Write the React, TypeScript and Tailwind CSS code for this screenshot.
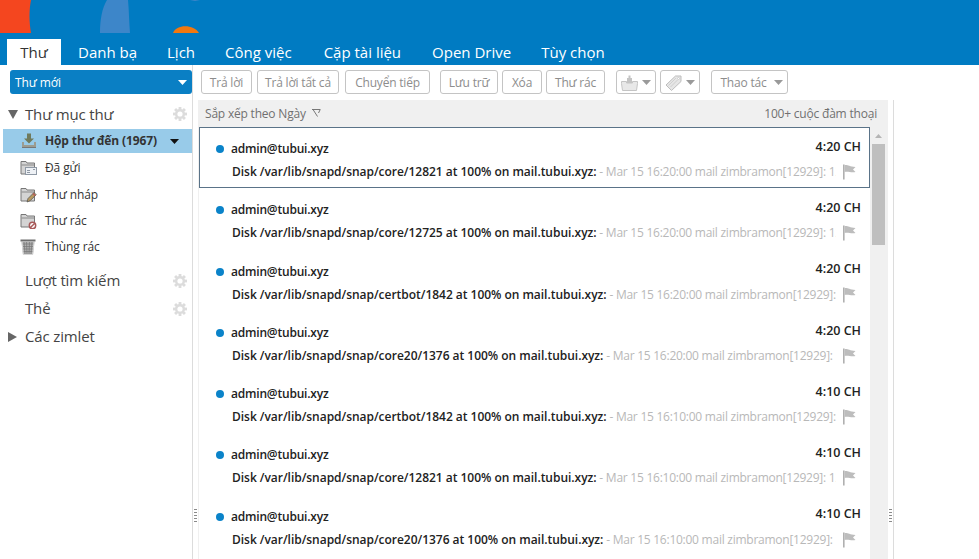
import React from "react";

const font = { fontFamily: '"Open Sans","Noto Sans",sans-serif' };

const Caret = ({ c = "#9a9a9a" }: { c?: string }) => (
  <svg width="9" height="5" viewBox="0 0 9 5"><path d="M0 0h9L4.5 5z" fill={c} /></svg>
);

const Gear = ({ className = "" }: { className?: string }) => (
  <svg width="14" height="14" viewBox="0 0 14 14" className={className}>
    <g fill="#dcdcdc">
      <circle cx="7" cy="7" r="5" />
      {[0, 45, 90, 135].map((a) => (
        <rect key={a} x="5.6" y="0" width="2.8" height="14" transform={`rotate(${a} 7 7)`} />
      ))}
    </g>
    <circle cx="7" cy="7" r="2.6" fill="#fff" />
  </svg>
);

const Flag = () => (
  <svg width="13" height="16" viewBox="0 0 13 16">
    <rect x="0" y="0.5" width="1.6" height="15" fill="#b0b0b0" />
    <path d="M1.6 1C5 .5 6 2.5 12.5 3L10 5.5l2.5 2.5C8 9 5 7 1.6 8z" fill="#bdbdbd" />
  </svg>
);

const Btn = ({ children, w }: { children: React.ReactNode; w: string }) => (
  <div className={`h-6 ${w} shrink-0 pt-px flex items-center justify-center gap-1 rounded-[3px] border border-[#c4c4c4] text-[12px] tracking-[-0.2px] text-[#8d8d8d] bg-white`}>
    {children}
  </div>
);

const FolderIcon = ({ kind }: { kind: string }) => {
  if (kind === "inbox")
    return (
      <svg width="16" height="16" viewBox="0 0 16 16">
        <path d="M6 0.5h4v5h3L8 10.5 3 5.5h3z" fill="#6f7a5c" />
        <path d="M1 9h2v3h10V9h2v5.5H1z" fill="#9c9c90" />
        <rect x="1" y="14" width="14" height="1" fill="#777" />
      </svg>
    );
  if (kind === "trash")
    return (
      <svg width="16" height="16" viewBox="0 0 16 16">
        <rect x="0.5" y="0.5" width="15" height="2" fill="#6e6e6e" />
        <path d="M1.5 2.5h13L13 15.5H3z" fill="#b0b0b0" />
        <path d="M4 3l1 12M6.5 3l.5 12M9.5 3L9 15M12 3l-1 12M2 5h12M2.3 7.5h11.4M2.6 10h10.8M2.9 12.5h10.2" stroke="#777" strokeWidth="0.7" />
        <path d="M2 3l1.3 12.5" stroke="#d8d8d8" strokeWidth="1" />
        <path d="M14 3l-1.3 12.5" stroke="#d8d8d8" strokeWidth="1" />
      </svg>
    );
  return (
    <svg width="17" height="16" viewBox="0 0 17 16">
      <path d="M1 1.5h5l1 1.5h7.5V14H1z" fill="#d4d4d4" stroke="#777" strokeWidth="1" />
      <rect x="1.5" y="4.5" width="13" height="1" fill="#8a8a8a" />
      {kind === "sent" && (
        <>
          <rect x="5.5" y="7.5" width="11" height="7" fill="#eef1f5" stroke="#8f99a5" />
          <path d="M7 10.5h3M7 12.5h3M13 9.5h2" stroke="#8f99a5" />
        </>
      )}
      {kind === "draft" && (
        <>
          <path d="M7 15l1-3.5 6-6 2.2 2.2-6 6z" fill="#b79a62" stroke="#4f4f4f" strokeWidth="0.7" />
          <path d="M13 6.5l2.2 2.2" stroke="#b85a5a" strokeWidth="1.4" />
        </>
      )}
      {kind === "junk" && (
        <>
          <circle cx="12.5" cy="12.5" r="3.2" fill="#fff" stroke="#a85a5a" strokeWidth="1.5" />
          <path d="M10.2 14.8l4.6-4.6" stroke="#a85a5a" strokeWidth="1.5" />
        </>
      )}
    </svg>
  );
};

const Folder = ({ kind, label }: { kind: string; label: string }) => (
  <div className="h-[26.4px] flex items-center pl-[20px]">
    <div className="w-[25px] flex"><FolderIcon kind={kind} /></div>
    <span className="text-[12px] tracking-[-0.1px] text-[#333]">{label}</span>
  </div>
);

const SideHead = ({ label, gear, tri }: { label: string; gear?: boolean; tri?: "down" | "right" }) => (
  <div className="h-7 flex items-center pr-[5px]">
    <div className="w-[25px] pl-[8px] flex">
      {tri === "down" && <svg width="10" height="9" viewBox="0 0 10 9"><path d="M0 0h10L5 9z" fill="#666" /></svg>}
      {tri === "right" && <svg width="9" height="10" viewBox="0 0 9 10"><path d="M0 0l9 5-9 5z" fill="#666" /></svg>}
    </div>
    <span className="flex-1 text-[15px] tracking-[-0.15px] text-[#444]">{label}</span>
    {gear && <Gear />}
  </div>
);

const rows = [
  ["snap/core/12821", "Mar 15 16:20:00 mail zimbramon[12929]: 12", "4:20 CH"],
  ["snap/core/12725", "Mar 15 16:20:00 mail zimbramon[12929]: 12", "4:20 CH"],
  ["snap/certbot/1842", "Mar 15 16:20:00 mail zimbramon[12929]: 12", "4:20 CH"],
  ["snap/core20/1376", "Mar 15 16:20:00 mail zimbramon[12929]: 12", "4:20 CH"],
  ["snap/certbot/1842", "Mar 15 16:10:00 mail zimbramon[12929]: 12", "4:10 CH"],
  ["snap/core/12821", "Mar 15 16:10:00 mail zimbramon[12929]: 12", "4:10 CH"],
  ["snap/core20/1376", "Mar 15 16:10:00 mail zimbramon[12929]: 12", "4:10 CH"],
];

const Row = ({ path, tail, time, sel }: { path: string; tail: string; time: string; sel?: boolean }) => (
  <div className={`h-[61.3px] shrink-0 pl-[16px] pr-[8px] pt-[11px] border ${sel ? "border-[#5a7388]" : "border-transparent"}`}>
    <div className="h-5 flex items-center">
      <div className="w-[8px] h-[8px] rounded-full bg-[#0a83c9] mr-[7px]" />
      <span className="text-[12px] font-semibold tracking-[-0.2px] text-[#222] flex-1">admin@tubui.xyz</span>
      <span className="mb-[4px] text-[12.5px] font-semibold text-[#222]">{time}</span>
    </div>
    <div className="h-5 mt-[3px] flex items-center pl-[16px] pr-[5px]">
      <div className="flex-1 min-w-0 overflow-hidden whitespace-nowrap text-[12px]">
        <span className="font-semibold tracking-[-0.03px] text-[#222]">Disk /var/lib/snapd/{path} at 100% on mail.tubui.xyz:</span>
        <span className="tracking-[-0.25px] text-[#b8b8b8]"> - {tail}</span>
      </div>
      <div className="ml-[7px] shrink-0 flex"><Flag /></div>
    </div>
  </div>
);

const Tab = ({ label, active, className = "" }: { label: string; active?: boolean; className?: string }) => (
  <div className={`h-[26px] shrink-0 flex items-center justify-center text-[15px] ${active ? "w-[54px] bg-white text-[#333]" : "text-white"} ${className}`}>
    {label}
  </div>
);

const Handle = () => (
  <div className="flex-1 flex flex-col justify-end pb-[37px] items-center">
    <div className="flex flex-col gap-[2px]">
      {[0, 1, 2, 3, 4].map((i) => (
        <div key={i} className="w-[3px] h-px bg-[#8a8a8a]" />
      ))}
    </div>
  </div>
);

export default function App() {
  return (
    <div style={font} className="w-[979px] h-[559px] overflow-hidden bg-white flex flex-col">
      <div className="h-[65px] bg-[#007bc2] shrink-0 flex flex-col">
        <div className="h-[39px] shrink-0 relative">
          <svg width="979" height="33" viewBox="0 0 979 33" className="absolute top-0 left-0">
            <path d="M0 0h31C29 10 29 22 31 33H0z" fill="#f4461f" />
            <path d="M100 33C100 20 102 8 107 0h21c1 10 1 22 2 33z" fill="#3d86c9" />
            <path d="M173 33c3-9 21-9 26 0z" fill="#f2780f" />
            <path d="M190 0h10l-5 1z" fill="#3d86c9" />
          </svg>
        </div>
        <div className="flex pl-[7px]">
          <Tab label="Thư" active />
          <Tab label="Danh bạ" className="ml-[17px]" />
          <Tab label="Lịch" className="ml-[30px]" />
          <Tab label="Công việc" className="ml-[30px]" />
          <Tab label="Cặp tài liệu" className="ml-[32px]" />
          <Tab label="Open Drive" className="ml-[31px]" />
          <Tab label="Tùy chọn" className="ml-[30px]" />
        </div>
      </div>

      <div className="flex-1 flex min-h-0">
        <div className="w-[193px] shrink-0 border-r border-[#dcdcdc] flex flex-col">
          <div className="h-[35px] shrink-0 pl-[10px] pt-[5px]">
            <div className="w-[182px] h-6 pt-px rounded-[3px] bg-[#0a7fc4] flex items-center justify-between pl-[5px] pr-[5px] text-[12px] tracking-[-0.1px] text-white">
              <span>Thư mới</span>
              <Caret c="#fff" />
            </div>
          </div>
          <SideHead label="Thư mục thư" gear tri="down" />
          <div className="h-6 ml-[3px] mt-px bg-[#98cbe9] flex items-center pl-[18px] pr-[13px]">
            <div className="w-[24px] flex"><FolderIcon kind="inbox" /></div>
            <span className="flex-1 text-[12px] font-bold tracking-[-0.12px] text-[#333]">Hộp thư đến (1967)</span>
            <Caret c="#111" />
          </div>
          <div className="pt-[2px] flex flex-col">
            <Folder kind="sent" label="Đã gửi" />
            <Folder kind="draft" label="Thư nháp" />
            <Folder kind="junk" label="Thư rác" />
            <Folder kind="trash" label="Thùng rác" />
          </div>
          <div className="mt-[6px] flex flex-col">
            <SideHead label="Lượt tìm kiếm" gear />
            <SideHead label="Thẻ" gear />
            <SideHead label="Các zimlet" tri="right" />
          </div>
        </div>

        <div className="flex-1 min-w-0 flex flex-col">
          <div className="h-[35px] shrink-0 flex items-start pt-[5px] pl-[8px]">
            <div className="flex">
              <Btn w="w-[51px]">Trả lời</Btn>
              <Btn w="w-[82px] ml-[5px]">Trả lời tất cả</Btn>
              <Btn w="w-[85px] ml-[6px]">Chuyển tiếp</Btn>
              <Btn w="w-[58px] ml-[10px]">Lưu trữ</Btn>
              <Btn w="w-[40px] ml-[4px]">Xóa</Btn>
              <Btn w="w-[59px] ml-[4px]">Thư rác</Btn>
              <Btn w="w-[40px] ml-[11px]">
                <svg width="17" height="16" viewBox="0 0 17 16">
                  <path d="M0.5 6.5h5V8h6V6.5h5v2l-1 7H1.5l-1-7z" fill="#e8e8e8" stroke="#c4c4c4" />
                  <path d="M6 8V3h1.5V0.5h2V3H11v5z" fill="#c4c4c4" />
                </svg>
                <Caret />
              </Btn>
              <Btn w="w-[40px] ml-[4px]">
                <svg width="17" height="17" viewBox="0 0 17 17">
                  <path d="M1 11L10.5 2H16v5.5L6.5 16.5z" fill="#e6e6e6" stroke="#bdbdbd" />
                  <path d="M3.5 11.5L11 4M5.5 13L12.5 6" stroke="#cfcfcf" />
                  <circle cx="13.5" cy="4.5" r="1" fill="#fff" stroke="#bdbdbd" strokeWidth="0.6" />
                </svg>
                <Caret />
              </Btn>
              <Btn w="w-[77px] ml-[11px] pl-[4px]">
                <span className="mr-[3px]">Thao tác</span>
                <Caret />
              </Btn>
            </div>
          </div>

          <div className="flex-1 min-h-0 flex">
            <div className="w-[5px] shrink-0 flex"><Handle /></div>
            <div className="w-[690px] shrink-0 bg-[#f0f0f0] flex flex-col">
              <div className="h-[27px] shrink-0 pt-px flex items-center justify-between pl-[7px] pr-[11px] text-[12px] tracking-[-0.2px] text-[#707070]">
                <span className="flex items-center gap-[6px]">
                  Sắp xếp theo Ngày
                  <svg width="9" height="8" viewBox="0 0 9 8" className="mb-[3px]"><path d="M0 0.5h8.5M1 0.5L5.5 7.5M6.5 4L8 1" fill="none" stroke="#777" /></svg>
                </span>
                <span>100+ cuộc đàm thoại</span>
              </div>
              <div className="flex-1 min-h-0 flex pl-px">
                <div className="w-[671px] shrink-0 bg-white flex flex-col overflow-hidden">
                  {rows.map((r, i) => (
                    <Row key={i} path={r[0]} tail={r[1]} time={r[2]} sel={i === 0} />
                  ))}
                </div>
                <div className="flex-1 pl-[2px] pr-[3px] flex flex-col items-stretch">
                  <div className="h-[17px] flex items-center justify-center">
                    <svg width="7" height="4" viewBox="0 0 7 4"><path d="M3.5 0L7 4H0z" fill="#b5b5b5" /></svg>
                  </div>
                  <div className="h-[101px] bg-[#bfbfbf]" />
                </div>
              </div>
            </div>
            <div className="w-[5px] shrink-0 flex"><Handle /></div>
            <div className="flex-1 border-l border-[#dcdcdc]" />
          </div>
        </div>
      </div>
    </div>
  );
}
